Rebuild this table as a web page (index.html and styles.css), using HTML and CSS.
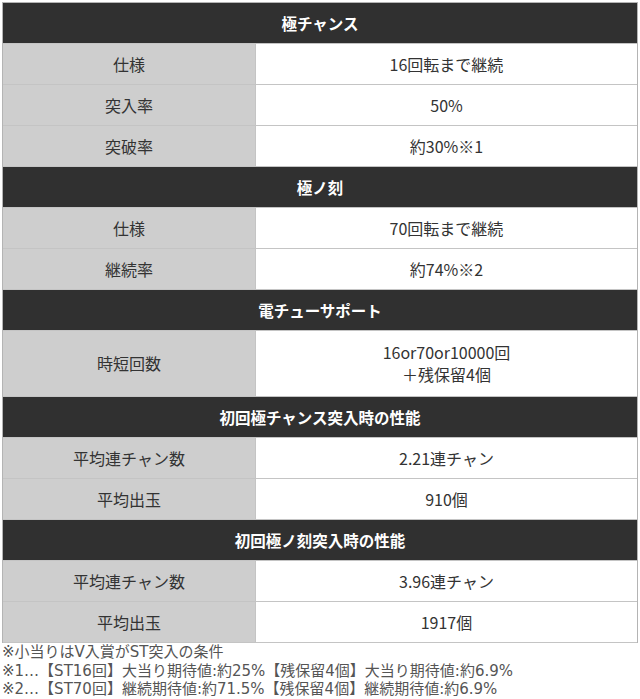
FILE: index.html
```html
<!DOCTYPE html>
<html lang="ja">
<head>
<meta charset="utf-8">
<link rel="stylesheet" href="styles.css">
</head>
<body>
<div class="spec">
  <div class="head">極チャンス</div>
  <div class="label">仕様</div><div class="val">16回転まで継続</div>
  <div class="label">突入率</div><div class="val">50%</div>
  <div class="label">突破率</div><div class="val">約30%※1</div>
  <div class="head">極ノ刻</div>
  <div class="label">仕様</div><div class="val">70回転まで継続</div>
  <div class="label">継続率</div><div class="val">約74%※2</div>
  <div class="head">電チューサポート</div>
  <div class="label tall">時短回数</div><div class="val tall">16or70or10000回<br>＋残保留4個</div>
  <div class="head">初回極チャンス突入時の性能</div>
  <div class="label">平均連チャン数</div><div class="val">2.21連チャン</div>
  <div class="label">平均出玉</div><div class="val">910個</div>
  <div class="head">初回極ノ刻突入時の性能</div>
  <div class="label">平均連チャン数</div><div class="val">3.96連チャン</div>
  <div class="label">平均出玉</div><div class="val">1917個</div>
</div>
<div class="notes">
  <p>※小当りはV入賞がST突入の条件</p>
  <p>※1…【ST16回】大当り期待値:約25%【残保留4個】大当り期待値:約6.9%</p>
  <p>※2…【ST70回】継続期待値:約71.5%【残保留4個】継続期待値:約6.9%</p>
</div>
</body>
</html>
```
FILE: styles.css
```css
html, body {
  margin: 0;
  padding: 0;
  background: #fff;
}
body {
  padding: 2px 0 0 2px;
  font-family: "Noto Sans CJK JP", "Noto Sans", sans-serif;
  color: #333;
}
.spec {
  width: 634px;
  display: grid;
  grid-template-columns: 253px 1fr;
  border-top: 1px solid #b4b4b4;
  border-left: 1px solid #b4b4b4;
  border-right: 1px solid #b4b4b4;
  font-size: 16px;
}
.spec > div {
  height: 41px;
  border-bottom: 1px solid #c4c4c4;
  display: flex;
  align-items: center;
  justify-content: center;
  text-align: center;
  line-height: 22px;
  padding-bottom: 1px;
  box-sizing: border-box;
}
.head {
  grid-column: 1 / span 2;
  background: #303030;
  color: #fff;
  font-weight: bold;
  font-size: 15.5px;
}
.label {
  background: #cecece;
  border-right: 1px solid #c4c4c4;
}
.val {
  background: #fff;
}
.spec > .tall {
  height: 66px;
}
.notes {
  font-family: "DejaVu Sans", "Noto Sans CJK JP", sans-serif;
  font-size: 15px;
  line-height: 18.5px;
  color: #555;
  margin-top: 0;
}
.notes p {
  margin: 0;
  white-space: nowrap;
}
```
